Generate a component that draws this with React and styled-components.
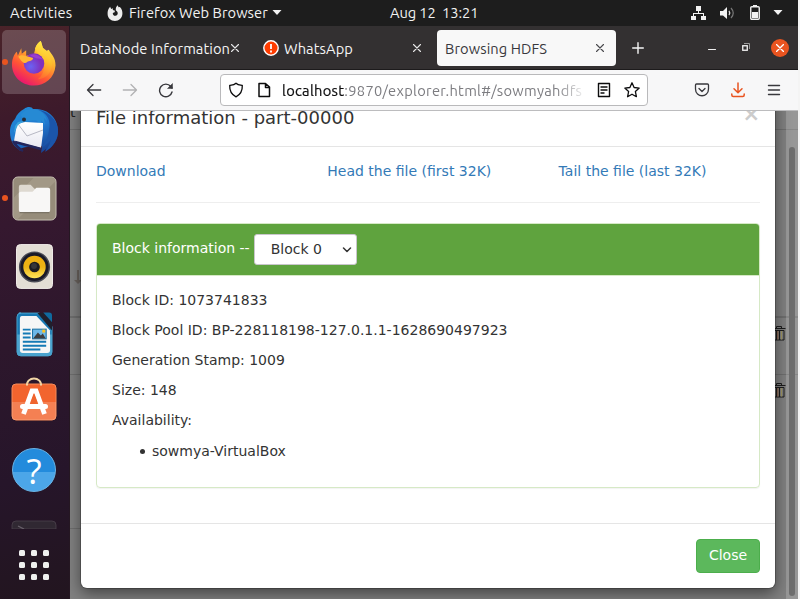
import React from "react";
import styled, { createGlobalStyle } from "styled-components";

const Global = createGlobalStyle`
  * { box-sizing: border-box; }
  body { margin: 0; background: #f4f4f4; overflow: hidden; }
  svg { display: block; flex: none; }
`;

const uiFont = `"Ubuntu", "Open Sans", "Noto Sans", sans-serif`;

const Screen = styled.div`
  width: 798px;
  height: 599px;
  display: grid;
  grid-template: 26px 573px / 70px 728px;
  overflow: hidden;
`;

const TopBar = styled.header`
  grid-column: 1 / 3;
  background: #1d1d1d;
  display: flex;
  align-items: center;
  color: #f2f2f2;
  font: 14.67px/25px ${uiFont};
  padding: 0 15px 0 10px;
`;
const TopLabel = styled.span`
  white-space: pre;
  height: 26px;
  width: ${(p) => p.$w}px;
  letter-spacing: ${(p) => p.$ls || 0}px;
  margin-left: ${(p) => p.$ml || 0}px;
`;
const Tray = styled.div`
  margin-left: auto;
  display: flex;
  align-items: center;
`;

const Dock = styled.nav`
  background: linear-gradient(168deg, #4a2329 0%, #3d1a2b 16%, #35182f 34%, #2d172c 55%, #26152a 78%, #22151f 100%);
  border-right: 1px solid #251722;
  padding: 4px 0 0 2px;
  display: flex;
  flex-direction: column;
  gap: 4px;
`;
const Slot = styled.div`
  width: 64px;
  height: ${(p) => p.$h || 64}px;
  flex: none;
  border-radius: 5px;
  display: flex;
  align-items: center;
  justify-content: center;
  position: relative;
  padding-bottom: ${(p) => p.$pb || 0}px;
  background: ${(p) => (p.$active ? "rgba(255,255,255,.19)" : "transparent")};
`;
const RunningDot = styled.i`
  position: absolute;
  left: 0;
  top: 29px;
  width: 6px;
  height: 6px;
  border-radius: 3px;
  background: #e95420;
`;

const Browser = styled.main`
  display: grid;
  grid-template-rows: 43px 42px 488px;
  min-width: 0;
`;
const TabStrip = styled.div`
  background: #333031;
  display: flex;
  align-items: center;
  padding: 0 9px 0 10px;
  color: #f5f5f5;
`;
const Tab = styled.div`
  width: ${(p) => p.$w}px;
  height: 36px;
  display: flex;
  align-items: center;
  padding: 0 ${(p) => p.$pr || 0}px 0 ${(p) => p.$pl || 0}px;
  border-radius: 4px;
  font: 14.67px/34px ${uiFont};
  color: ${(p) => (p.$active ? "#38383d" : "#f5f5f5")};
  background: ${(p) => (p.$active ? "#f8f8f8" : "transparent")};
  margin-top: 1px;
`;
const TabTitle = styled.span`
  flex: 1;
  min-width: 0;
  padding-top: 2px;
  white-space: nowrap;
  letter-spacing: ${(p) => p.$ls || 0}px;
`;
const Controls = styled.div`
  flex: 1;
  display: flex;
  align-items: center;
`;
const Push = styled.span`
  margin-left: ${(p) => p.$l}px;
`;
const CloseCircle = styled.span`
  margin-left: auto;
  width: 18px;
  height: 18px;
  border-radius: 9px;
  background: #e95420;
  display: flex;
  align-items: center;
  justify-content: center;
`;

const Toolbar = styled.div`
  background: #f7f7f8;
  border-top: 1px solid #1d1b1c;
  border-bottom: 1px solid #bcbcbe;
  display: flex;
  align-items: center;
  padding: 0 16px;
`;
const NavButtons = styled.div`
  width: 134px;
  display: flex;
  gap: 20px;
`;
const UrlField = styled.div`
  width: 428px;
  height: 32px;
  border: 1px solid #b9b9bb;
  border-radius: 4px;
  background: #fff;
  display: flex;
  align-items: center;
  padding: 0 6px;
`;
const Url = styled.div`
  margin-left: 11px;
  width: 305px;
  overflow: hidden;
  white-space: nowrap;
  padding-top: 2px;
  font: 14.67px/28px ${uiFont};
  letter-spacing: 0.3px;
  color: #7c7c80;
  mask-image: linear-gradient(90deg, #000 90%, transparent 100%);
  b { font-weight: 400; color: #0c0c0d; -webkit-text-stroke: 0.2px #0c0c0d; }
`;
const ToolIcons = styled.div`
  margin-left: auto;
  display: flex;
  gap: 20px;
`;

const Viewport = styled.section`
  position: relative;
  overflow: hidden;
  background: #808080;
`;
const Listing = styled.div`
  display: flex;
  flex-direction: column;
  font: 14px/20px "DejaVu Sans", sans-serif;
  color: #202020;
`;
const ListingRow = styled.div`
  height: ${(p) => p.$h}px;
  width: ${(p) => (p.$w ? `${p.$w}px` : "auto")};
  flex: none;
  border-bottom: ${(p) => p.$b || 0}px solid #6e6e6e;
  display: flex;
  align-items: ${(p) => p.$align || "flex-start"};
  justify-content: ${(p) => (p.$end ? "flex-end" : "flex-start")};
  padding: ${(p) => p.$pad || 0};
`;
const Track = styled.div`
  position: absolute;
  right: 0;
  top: 0;
  bottom: 0;
  width: 12px;
  background: rgba(255, 255, 255, 0.18);
  padding: 36px 3px 3px;
`;
const Thumb = styled.div`
  height: 449px;
  border-radius: 3px;
  background: #6e6e6e;
`;

const Modal = styled.div`
  position: absolute;
  left: 11px;
  top: -24px;
  width: 694px;
  height: 501px;
  background: #fff;
  border-radius: 6px;
  box-shadow: 0 5px 15px rgba(0, 0, 0, 0.5), 0 0 0 1px rgba(0, 0, 0, 0.2);
  font: 14px/20px "DejaVu Sans", sans-serif;
  color: #333;
`;
const ModalHeader = styled.div`
  height: 60px;
  border-bottom: 1px solid #e5e5e5;
  padding: 18px 15px 0;
  display: flex;
  justify-content: space-between;
`;
const ModalTitle = styled.h4`
  margin: 0;
  font-weight: 400;
  font-size: 18px;
  line-height: 26px;
`;
const Dismiss = styled.button`
  border: 0;
  padding: 0;
  background: none;
  color: #ccc;
  height: 22px;
  margin-top: -2px;
  font: 700 21px/21px "DejaVu Sans", sans-serif;
`;
const ModalBody = styled.div`
  padding: 14px 15px 0;
`;
const LinkRow = styled.div`
  display: grid;
  grid-template-columns: 231.3px 231.3px auto;
  height: 42px;
  border-bottom: 1px solid #eee;
`;
const Link = styled.a`
  color: #337ab7;
`;
const Panel = styled.div`
  margin-top: 20px;
  height: 265px;
  border: 1px solid #d6e9c6;
  border-radius: 4px;
  box-shadow: 0 1px 1px rgba(0, 0, 0, 0.05);
  overflow: hidden;
`;
const PanelHeading = styled.div`
  height: 52px;
  background: #5fa33e;
  color: #fff;
  border-bottom: 1px solid #d6e9c6;
  padding: 10px 15px;
  display: flex;
  gap: 4px;
  line-height: 28px;
`;
const Select = styled.div`
  width: 103px;
  height: 31px;
  background: #fff;
  color: #333;
  border: 1px solid #c9c6cc;
  border-radius: 3px;
  padding: 0 4px 0 16px;
  display: flex;
  line-height: 28px;
  justify-content: space-between;
  svg { margin-top: 12px; }
`;
const PanelBody = styled.div`
  padding: 14px 15px;
`;
const Line = styled.p`
  margin: 0 0 10px;
`;
const List = styled.ul`
  margin: 11px 0 0;
  padding: 0 0 0 28px;
  list-style: none;
  li { display: flex; align-items: center; gap: 7px; }
  li::before { content: ""; width: 5px; height: 5px; margin-top: 1px; border-radius: 50%; background: #333; }
`;
const ModalFooter = styled.div`
  margin-top: 35px;
  border-top: 1px solid #e5e5e5;
  padding: 15px;
  display: flex;
  justify-content: flex-end;
`;
const CloseButton = styled.button`
  width: 64px;
  height: 34px;
  padding: 0 0 2px;
  border: 1px solid #4cae4c;
  border-radius: 4px;
  background: #5cb85c;
  color: #fff;
  font: 14px/30px "DejaVu Sans", sans-serif;
`;

const Stroke = ({ w, h, d, c = "#0c0c0d", sw = 1.3, vb }) => (
  <svg width={w} height={h} viewBox={vb || `0 0 ${w} ${h}`} fill="none" stroke={c} strokeWidth={sw} strokeLinecap="round" strokeLinejoin="round">
    <path d={d} />
  </svg>
);
const Cross = ({ c, s = 8, sw = 1.1 }) => <Stroke w={s} h={s} c={c} sw={sw} d={`M.5.5 ${s - 0.5} ${s - 0.5}M${s - 0.5}.5.5 ${s - 0.5}`} />;
const Caret = () => (
  <svg width="10" height="6"><path d="M.5 0h9L5 5Z" fill="#f2f2f2" /></svg>
);

const FirefoxGlyph = () => (
  <svg width="16" height="17" viewBox="0 0 16 17">
    <path d="M3.1 1.7 4.2 4 5.9 3.2 5.8 5 8 5.8 7.6 7.3 5.8 8C5.7 10 7 11 8.6 10.8c2-.3 2.7-2.3 1.7-4L8.8 5.3C8.6 3.3 9.3 1.2 10.8.3l.7 2 1.4-.2c2 2.1 2.7 4.1 2.5 7C15 13.4 12 16 8 16 3.700 16 .7 13 .6 9 .5 6 1 4 3.1 1.700Z" fill="#ededed" />
  </svg>
);

const FirefoxIcon = () => (
  <svg width="46" height="47" viewBox="0 0 46 48">
    <defs>
      <linearGradient id="fxa" x1=".8" y1="0" x2=".2" y2="1">
        <stop offset="0" stopColor="#fff44f" /><stop offset=".35" stopColor="#ffb02c" /><stop offset=".65" stopColor="#ff5634" /><stop offset="1" stopColor="#e6097b" />
      </linearGradient>
      <linearGradient id="fxb" x1=".7" y1="0" x2=".5" y2="1">
        <stop offset="0" stopColor="#fff24a" /><stop offset=".5" stopColor="#ffc22c" /><stop offset="1" stopColor="#ff6a30" />
      </linearGradient>
      <radialGradient id="fxp" cx=".35" cy=".65"><stop offset="0" stopColor="#6b62f2" /><stop offset="1" stopColor="#8030bd" /></radialGradient>
    </defs>
    <path d="M10 9.500 10.500 15 15 11.500 15 17 23 15 24 11C25 6 28 3 30 2l2 7 4 3 2-1c3 5 7 8 7 16C44 40 34 47.500 23 47.500 10 47.500.5 38 .5 26 .5 20 3 15 5.500 13l1 4Z" fill="url(#fxa)" />
    <path d="M24 10C25 6 28 3 30 2l2 7 4 5c6 7 7 14 3 20-3 5-8 7-12 7 7-5 8-15 4-21-2-4-5-6-7-10Z" fill="url(#fxb)" />
    <circle cx="23" cy="25" r="10.500" fill="url(#fxp)" />
    <path d="M19 17c4-3 9-1 14 5-3-2-5-2-7-2Z" fill="#9a3fd0" />
    <path d="M7 18c4-3 8 0 15 1.500 0 3-4 3-6 4-2 2-5 1-9-5.500Z" fill="#ffb635" />
  </svg>
);

const ThunderbirdIcon = () => (
  <svg width="48" height="48" viewBox="0 0 48 48">
    <defs>
      <linearGradient id="tb" x1=".2" y1="0" x2=".8" y2="1"><stop offset="0" stopColor="#2089d6" /><stop offset=".5" stopColor="#2178cf" /><stop offset="1" stopColor="#153a8b" /></linearGradient>
      <linearGradient id="te" x1="0" y1="0" x2="0" y2="1"><stop offset="0" stopColor="#fff" /><stop offset="1" stopColor="#e8e8f2" /></linearGradient>
    </defs>
    <path d="M14 3c4-3 8-2 9 0 15-1 25 9 25 22 0 9-5 16-13 21l1-3-5 4 1-7C12 40 5 44 12 45 4 42 0 35 0 26c0-6 2-10 5-13 2-5 5-8 9-10Z" fill="url(#tb)" />
    <path d="M22 3c12 0 20 9 17 21-1 8-4 14-7 17 5-3 8-5 9-8-1 6-4 9-5 12 8-5 12-12 12-21C47 12 36 3 22 3Z" fill="#1b55aa" />
    <path d="M22 3c8 0 14 5 15 12l-3-3 1 7-4-5 1 7-5-6c-5-1-9 0-12 2l-4-8c2-4 6-6 11-6Z" fill="#268ad4" />
    <path d="m7 18 8-2 18 1v10l-2 15L4 35Z" fill="url(#te)" />
    <path d="m8 18 9 12 16-6" fill="none" stroke="#b7b8c4" />
    <path d="m5 36 26 7M3 35c3 5 6 8 10 10" stroke="#24265c" strokeWidth="2.500" fill="none" />
    <path d="M8 16 5 20l-1 7 4-8 6-4Z" fill="#39a4dc" />
    <circle cx="14" cy="13.500" r="2" fill="#282c38" />
  </svg>
);

const FilesIcon = () => (
  <svg width="45" height="45" viewBox="0 0 46 46">
    <rect x="1" y="1" width="44" height="44" rx="5" fill="#968c7a" stroke="#c7c0b2" />
    <path d="M2 22 22 2h18q4 0 4 4L6 44q-4 0-4-4Z" fill="#aaa08d" opacity=".6" />
    <path d="M7 11q0-2 2-2h10l4 4h13v9H7Z" fill="#ded9d0" />
    <path d="M7 18q0-2 2-2h12l4-4h12q2 0 2 2v21q0 2-2 2H9q-2 0-2-2Z" fill="#f8f7f6" />
    <path d="M8 37.500h30" stroke="#6f675a" />
  </svg>
);

const MusicIcon = () => (
  <svg width="37" height="45" viewBox="0 0 38 46">
    <defs><linearGradient id="sp" x1="0" y1="0" x2="0" y2="1"><stop offset="0" stopColor="#f0ae10" /><stop offset=".5" stopColor="#ebb315" /><stop offset="1" stopColor="#ffe45a" /></linearGradient></defs>
    <rect x=".5" y=".5" width="37" height="45" rx="4" fill="#e3ded5" stroke="#f2eeea" />
    <circle cx="19" cy="23.500" r="16" fill="#4a4b55" />
    <circle cx="19" cy="23.500" r="14.500" fill="#1a1a28" />
    <circle cx="19" cy="23.500" r="11.500" fill="url(#sp)" />
    <circle cx="19" cy="23.500" r="5.500" fill="#1d1c20" /><circle cx="18.500" cy="22.500" r="3" fill="#35363a" />
  </svg>
);

const WriterIcon = () => (
  <svg width="37" height="45" viewBox="0 0 38 46">
    <path d="M3 1h21l13 14v26q0 4-4 4H5q-4 0-4-4V5q0-4 4-4Z" fill="#1778b2" stroke="#49a3ce" />
    <path d="M1 23h36v18q0 4-4 4H5q-4 0-4-4Z" fill="#4aa3ce" />
    <path d="M6 4h15l14 15v20q0 3-3 3H7q-3 0-3-3V7q0-3 2-3Z" fill="#f6f6f6" />
    <path d="M22 1h6l9 10v8Z" fill="#20202c" />
    <path d="M28 .500h6q3 0 3 3v7Z" fill="#106b9f" />
    <path d="M7 18h8M7 22h8M7 26h8M7 30.500h24M7 34.500h24M7 38.500h18" stroke="#157ab5" strokeWidth="2" />
    <rect x="17" y="17.500" width="14" height="10" fill="#6eb8e8" stroke="#166b9e" />
    <path d="m17.500 27 5-6 3 3 2-2 3 5Z" fill="#3e3e40" /><rect x="27" y="18" width="3" height="3" fill="#ffc31f" />
  </svg>
);

const StoreIcon = () => (
  <svg width="46" height="44" viewBox="0 0 46 44">
    <path d="M16 9C15-1 31-1 30 9" fill="none" stroke="#f2d7a6" strokeWidth="2" />
    <rect x="1" y="7" width="44" height="36" rx="4" fill="#f2642e" stroke="#f78b59" />
    <path d="M1 25h44v14q0 4-4 4H5q-4 0-4-4Z" fill="#fff" opacity=".18" />
    <path d="M16 6.500v2M30 6.500v2" stroke="#f2d7a6" strokeWidth="2" />
    <path d="M12.500 37 21 14h4l8.500 23" fill="none" stroke="#fff" strokeWidth="4.800" />
    <path d="M11.500 29.500h23" stroke="#fff" strokeWidth="5" strokeLinecap="round" />
    <path d="m23 17-4 10h8Z" fill="#ef642f" />
  </svg>
);

const HelpMark = styled.div`
  width: 44px;
  height: 44px;
  border-radius: 50%;
  border: 1px solid #69b4e7;
  background: linear-gradient(#238bdc 54%, #4ca6e8 54%);
  color: #fff;
  text-align: center;
  font: 35px/44px "Open Sans", sans-serif;
`;

const TerminalIcon = () => (
  <svg width="46" height="9" viewBox="0 0 46 9">
    <path d="M1 9V5q0-4 4-4h36q4 0 4 4v4Z" fill="#302832" stroke="#4b414c" strokeWidth=".8" />
    <path d="m7 6 6 3" stroke="#68606a" strokeWidth="1.300" />
  </svg>
);

const AppGrid = () => (
  <svg width="32" height="32">
    {[1, 13, 25].map((y) => [1, 13, 25].map((x) => <rect key={`${x}-${y}`} x={x} y={y} width="6" height="6" rx="1.500" fill="#efefef" />))}
  </svg>
);

const Trash = () => (
  <svg width="12" height="16" viewBox="0 0 12 16" fill="none" stroke="#1c1c1c">
    <path d="M0 3.500h11.500M2.500 3V1.500h5V3M.5 5.500h9.500v9.500H0M2.500 6v9M5.500 6v9" />
    <path d="M3.800 6v8.500" stroke="#8a5a3c" /><path d="M7.500 6v8.500" stroke="#a09660" />
  </svg>
);

export default function App() {
  return (
    <Screen>
      <Global />
      <TopBar>
        <TopLabel $w={97} $ls={0.22}>Activities</TopLabel>
        <FirefoxGlyph />
        <TopLabel $w={143} $ml={6} $ls={0.05}>Firefox Web Browser</TopLabel>
        <Caret />
        <TopLabel $w={100} $ml={108} $ls={-0.1}>Aug 12  13:21</TopLabel>
        <Tray>
          <svg width="15" height="14" fill="#f2f2f2"><path d="M5 0h5v5H8v2h5v3h2v4h-5v-4h2V8H3v2h2v4H0v-4h2V7h5V5H5Z" /></svg>
          <Push $l={14} />
          <svg width="15" height="14" fill="none"><path d="M0 5h3l4-4v12L3 9.500H0Z" fill="#f2f2f2" /><path d="M9 5q1.500 2 0 4" stroke="#ddd" strokeWidth="1.300" /><path d="M11 2q4.500 5 0 10" stroke="#777" strokeWidth="1.200" /></svg>
          <Push $l={15} />
          <svg width="10" height="16"><path d="M3 0h4v2H3Z" fill="#f2f2f2" /><rect x=".75" y="1.750" width="8.500" height="12.500" rx="1" fill="none" stroke="#f2f2f2" strokeWidth="1.400" /><path d="M2 7h6v6H2Z" fill="#f2f2f2" /></svg>
          <Push $l={13} />
          <Caret />
        </Tray>
      </TopBar>

      <Dock>
        <Slot $active><RunningDot /><FirefoxIcon /></Slot>
        <Slot><ThunderbirdIcon /></Slot>
        <Slot><RunningDot /><FilesIcon /></Slot>
        <Slot><MusicIcon /></Slot>
        <Slot><WriterIcon /></Slot>
        <Slot $pb={6}><StoreIcon /></Slot>
        <Slot><HelpMark>?</HelpMark></Slot>
        <Slot $h={37} $pb={1}><TerminalIcon /></Slot>
        <Slot $h={36}><AppGrid /></Slot>
      </Dock>

      <Browser>
        <TabStrip>
          <Tab $w={183} $pr={24}>
            <TabTitle $ls={0.08}>DataNode Information</TabTitle>
            <Cross c="#e8e8e8" />
          </Tab>
          <Tab $w={174} $pr={16}>
            <svg width="16" height="16"><circle cx="8" cy="8" r="7.200" fill="#ff3c00" stroke="#fff" strokeWidth="1.400" /><path d="M8 4v5M8 10.500v2" stroke="#fff" strokeWidth="1.800" /></svg>
            <Push $l={5} />
            <TabTitle $ls={0.1}>WhatsApp</TabTitle>
            <Cross c="#e8e8e8" />
          </Tab>
          <Tab $active $w={179} $pl={8} $pr={12}>
            <TabTitle $ls={0.1}>Browsing HDFS</TabTitle>
            <Cross c="#48484c" />
          </Tab>
          <Controls>
            <Push $l={16} />
            <Stroke w={12} h={12} c="#f5f5f5" sw={1.4} d="M6 .7v10.600M.7 6h10.600" />
            <Push $l={64} />
            <Stroke w={8} h={8} c="#f0f0f0" sw={1.1} d="M.5 5.500h7" />
            <Push $l={26} />
            <svg width="8" height="9" fill="none"><path d="M2 .500h5.500V6" stroke="#999" /><rect x=".75" y="2.750" width="4.500" height="4.500" stroke="#f5f5f5" strokeWidth="1.300" /></svg>
            <CloseCircle><Cross c="#fff" sw={1.4} /></CloseCircle>
          </Controls>
        </TabStrip>

        <Toolbar>
          <NavButtons>
            <Stroke w={16} h={16} c="#38383d" d="M1.700 8h13M7 2.500 1.500 8 7 13.500" />
            <Stroke w={16} h={16} c="#b2b2b4" d="M1.300 8h13M9 2.500 14.500 8 9 13.500" />
            <svg width="16" height="16" fill="none" stroke="#38383d" strokeWidth="1.400"><path d="M14 10a6.300 6.300 0 1 1-1.200-5.500l1.200 1.500" strokeLinecap="round" /><path d="M14.500 1.500v5h-5Z" fill="#38383d" strokeWidth=".5" /></svg>
          </NavButtons>
          <UrlField>
            <Push $l={1} />
            <Stroke w={16} h={16} d="M8 1.200C6.500 2.700 4.500 3 1.700 3.500 1.500 8 2.500 12 8 14.800 13.500 12 14.500 8 14.300 3.500 11.500 3 9.500 2.700 8 1.200Z" />
            <Push $l={13} />
            <Stroke w={14} h={16} sw={1.5} d="M2 1.500H8.500L12.500 5v9.500H2ZM8.500 2v3.500h4" />
            <Url><b>localhost</b>:9870/explorer.html#/sowmyahdfs</Url>
            <Push $l={10} />
            <Stroke w={14} h={16} sw={1.4} d="M1.500 1.500h11v13h-11ZM4 5h6M4 8h6M4 11h3" />
            <Push $l={13} />
            <Stroke w={16} h={16} sw={1.3} d="m8 .800 2.100 4.700 5.100.6-3.800 3.500 1 5.100L8 12.200l-4.400 2.500 1-5.100L.8 6.100l5.100-.6Z" />
          </UrlField>
          <ToolIcons>
            <Stroke w={16} h={16} c="#38383d" d="M2.500 2h11q1 0 1 1v4c0 9-13 9-13 0V3q0-1 1-1ZM5 6.500l3 3 3-3" />
            <Stroke w={16} h={16} c="#e95420" sw={1.5} d="M8 1v9.500M4 6.700l4 4 4-4M1.800 12v1q0 1.500 1.500 1.500h9.400q1.500 0 1.500-1.500v-1" />
            <Stroke w={16} h={16} c="#38383d" sw={1.4} d="M2.500 3.500h11M2.500 8h11M2.500 12.500h11" />
          </ToolIcons>
        </Toolbar>

        <Viewport>
          <Listing>
            <ListingRow $h={19} $b={1} $align="center" $pad="0 0 16px">t</ListingRow>
            <ListingRow $h={188} $b={2} $align="flex-end" $pad="0 0 31px 4px">
              <svg width="8" height="15"><path d="M3 0h2v10h3l-4 4-4-4h3Z" fill="#6a635e" /></svg>
            </ListingRow>
            <ListingRow $h={57} $b={1} $end $pad="7px 12px 0 0"><Trash /></ListingRow>
            <ListingRow $h={153} $end $pad="7px 12px 0 0"><Trash /></ListingRow>
            <ListingRow $h={1} $b={1} $w={300} />
          </Listing>
          <Track><Thumb /></Track>

          <Modal>
            <ModalHeader>
              <ModalTitle>File information - part-00000</ModalTitle>
              <Dismiss>×</Dismiss>
            </ModalHeader>
            <ModalBody>
              <LinkRow>
                <Link>Download</Link>
                <Link>Head the file (first 32K)</Link>
                <Link>Tail the file (last 32K)</Link>
              </LinkRow>
              <Panel>
                <PanelHeading>
                  <span>Block information --</span>
                  <Select>
                    Block 0
                    <Stroke w={10} h={6} c="#333" sw={1.5} d="m1.500 1 3.500 3.500L8.500 1" />
                  </Select>
                </PanelHeading>
                <PanelBody>
                  <Line>Block ID: 1073741833</Line>
                  <Line>Block Pool ID: BP-228118198-127.0.1.1-1628690497923</Line>
                  <Line>Generation Stamp: 1009</Line>
                  <Line>Size: 148</Line>
                  <Line>Availability:</Line>
                  <List><li>sowmya-VirtualBox</li></List>
                </PanelBody>
              </Panel>
            </ModalBody>
            <ModalFooter><CloseButton>Close</CloseButton></ModalFooter>
          </Modal>
        </Viewport>
      </Browser>
    </Screen>
  );
}
